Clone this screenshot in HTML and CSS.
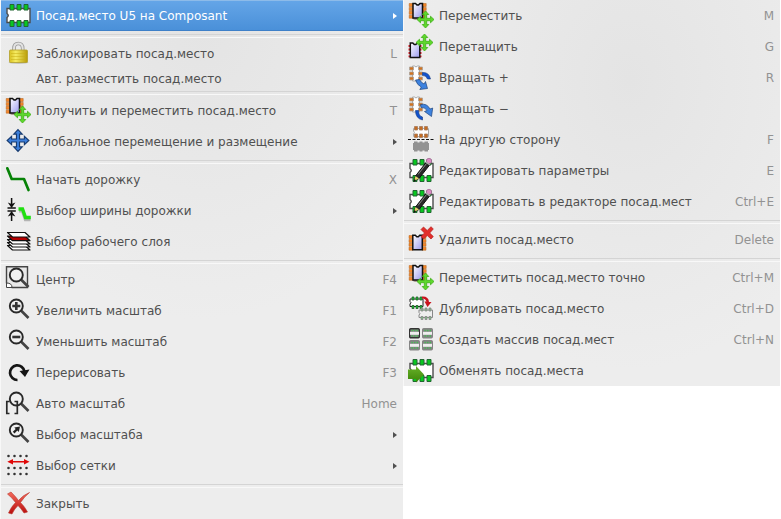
FILE: index.html
```html
<!DOCTYPE html>
<html lang="ru">
<head>
<meta charset="utf-8">
<title>Контекстное меню</title>
<link rel="stylesheet" href="styles.css">
</head>
<body>
<svg class="defs" aria-hidden="true">
  <defs>
    <linearGradient id="chipFill" x1="0" y1="0" x2="1" y2="1"><stop offset="0" stop-color="#fff"/><stop offset="1" stop-color="#9999ee"/></linearGradient>
    <linearGradient id="gold" x1="0" y1="0" x2="1" y2="0"><stop offset="0" stop-color="#d8c020"/><stop offset=".35" stop-color="#f6ec62"/><stop offset="1" stop-color="#b89c08"/></linearGradient>
    <linearGradient id="redFade" x1="0" y1="0" x2="0" y2="1"><stop offset="0" stop-color="#f46a5c"/><stop offset="1" stop-color="#b80c0c"/></linearGradient>
    <linearGradient id="greenFade" x1="0" y1="0" x2="0" y2="1"><stop offset="0" stop-color="#69b32a"/><stop offset="1" stop-color="#3c8508"/></linearGradient>
    <path id="cross4" d="M0-8.500L3.300-5H1.200V-1.200H5V-3.300L8.500 0L5 3.300V1.200H1.200V5H3.300L0 8.500L-3.300 5H-1.200V1.200H-5V3.300L-8.500 0L-5-3.300V-1.200H-1.200V-5H-3.300Z"/>
    <g id="chip">
      <path d="M0 0H2.500L4 1.500H5.500L7 0H9.500V14.500H0Z" fill="url(#chipFill)" stroke="#111" stroke-width="1.500"/>
    </g>
    <g id="orangePins" fill="#f5862a" stroke="#b0621c" stroke-width=".5">
      <path d="M0 0h4v3H0zM0 3.900h4v3H0zM0 7.800h4v3H0zM0 11.700h4v3H0zM13 0h4v3h-4zM13 3.900h4v3h-4zM13 7.800h4v3h-4zM13 11.700h4v3h-4z"/>
    </g>
    <g id="lens">
      <path d="M16 13.500L23.500 21" stroke="#444" stroke-width="2.600"/>
      <circle cx="11.300" cy="9" r="6.500" fill="#f1f1f1" stroke="#292929" stroke-width="1.900"/>
    </g>
    <g id="sideModule">
      <path d="M4.500 2H6.500Q8 4 9.500 2H11.500V17H4.500Z" fill="#fff" stroke="#aaa"/>
      <path d="M1.500 3h4v3h-4zM1.500 8h4v3h-4zM1.500 13h4v3h-4zM10.500 3h4v3h-4zM10.500 8h4v3h-4zM10.500 13h4v3h-4z" fill="#d4731e" stroke="#a9a29b" stroke-width=".8"/>
    </g>
    <symbol id="footprint" viewBox="0 0 28 27">
      <path d="M2 6.500H25V20.500H2V15.500Q4.500 13.500 2 11.500Z" fill="#fff" stroke="#4b4b4b" stroke-width="1.400"/>
      <path d="M5 2.500h4v5.500H5zM12 2.500h4v5.500h-4zM19 2.500h4v5.500h-4zM5 18.500h4v6H5zM12 18.500h4v6h-4zM19 18.500h4v6h-4z" fill="#08c820" stroke="#226632"/>
    </symbol>
    <symbol id="lock" viewBox="0 0 28 27">
      <ellipse cx="13.500" cy="22.500" rx="10" ry="1.500" fill="#c4c4bc"/>
      <path d="M9 11V8.500Q9 3.500 13.300 3.500T17.700 8.500V11" fill="none" stroke="#999" stroke-width="3.600"/>
      <path d="M9 11V8.500Q9 3.500 13.300 3.500T17.700 8.500V11" fill="none" stroke="#e2e2e2" stroke-width="2"/>
      <rect x="4.500" y="10" width="18" height="12.500" rx="1" fill="url(#gold)" stroke="#b3a02c" stroke-width=".8"/>
      <path d="M6 13.500H21M6 16.500H21M6 19.500H21" stroke="#c7ad15" stroke-width=".5"/>
    </symbol>
    <symbol id="get-move" viewBox="0 0 28 27">
      <rect x="5" y="2" width="11" height="16" rx="2" fill="#7d6b59" opacity=".6"/>
      <use href="#orangePins" x="1.200" y="1.500"/><use href="#chip" x="5" y="1.500"/>
      <use href="#cross4" x="17.500" y="17.500" fill="#5ed82c" stroke="#3fae18" stroke-width=".8"/>
    </symbol>
    <symbol id="drag" viewBox="0 0 28 27">
      <path d="M0.500 13h13M0.500 16.500h13M0.500 20h13M0.500 23.300h13" stroke="#e3202a" stroke-width="1.800"/>
      <use href="#chip" x="2.300" y="10"/>
      <use href="#cross4" x="16.500" y="9.500" fill="#5ed82c" stroke="#3fae18" stroke-width=".8"/>
    </symbol>
    <symbol id="move-all" viewBox="0 0 28 27">
      <g transform="translate(13 12.500) scale(1.280)"><use href="#cross4" fill="#3c7fdc" stroke="#183c70" stroke-width=".9"/></g>
    </symbol>
    <symbol id="track" viewBox="0 0 28 27"><path d="M2.300 2.300L6.700 13H19L23.500 24" fill="none" stroke="#068206" stroke-width="2.700" stroke-linecap="round" stroke-linejoin="round"/></symbol>
    <symbol id="track-width" viewBox="0 0 28 27">
      <path d="M14 13.800H17.500L20.500 22.500H25.500" fill="none" stroke="#b4b4b4" stroke-width="3.500"/>
      <path d="M13.500 12H17.500L20.500 20.500H25.800" fill="none" stroke="#20e010" stroke-width="3.400"/>
      <path d="M2.500 11H10.800M2.500 14H10.800M6.600 1V7M6.600 18V24" stroke="#111" stroke-width="1.500"/>
      <path d="M2.800 5.500L6.600 7L10.400 5.500L6.600 11ZM2.800 19.500L6.600 18L10.400 19.500L6.600 14Z" fill="#111"/>
    </symbol>
    <symbol id="layers" viewBox="0 0 28 27">
      <g stroke="#111" stroke-width="1.200" fill="#fff" stroke-linejoin="round">
        <path d="M2.500 17.500H20L25 22H7.500Z"/><path d="M2.500 14.500H20L25 19H7.500Z"/><path d="M2.500 11.500H20L25 16H7.500Z"/>
        <path d="M2.500 8H20L25 12.700H7.500Z" fill="#b40000"/><path d="M2.500 4.500H20L25 9H7.500Z"/>
      </g>
    </symbol>
    <symbol id="zoom-page" viewBox="0 0 28 27">
      <path d="M1.500 .800H22.500V21.500H7L1.500 17Z" fill="#e8e8e8" stroke="#444" stroke-width="1.400"/>
      <path d="M1.500 17V21.500H7Q7 17 1.500 17" fill="#fff" stroke="#444"/><use href="#lens"/>
    </symbol>
    <symbol id="zoom-in" viewBox="0 0 28 27"><use href="#lens"/><path d="M7.300 9H15.300M11.300 5V13" stroke="#333" stroke-width="2.600"/></symbol>
    <symbol id="zoom-out" viewBox="0 0 28 27"><use href="#lens"/><path d="M7.300 9H15.300" stroke="#333" stroke-width="2.600"/></symbol>
    <symbol id="redraw" viewBox="0 0 28 27"><path d="M12.500 21A7.300 7.300 0 1 1 19.500 12.500" fill="none" stroke="#151515" stroke-width="2.700"/><path d="M14.500 12L24.500 10.500L20 18Z" fill="#151515"/></symbol>
    <symbol id="zoom-auto" viewBox="0 0 28 27"><use href="#lens"/><path d="M4.500 11.500H1.800V23.500H4.500M9.500 11.500H12.300V23.500H9.500" fill="none" stroke="#292929" stroke-width="1.700"/></symbol>
    <symbol id="zoom-select" viewBox="0 0 28 27"><use href="#lens"/><path d="M15 5.500L13.800 11L12.300 9.600L9.500 12.500L7.800 10.800L10.700 8L9.300 6.600Z" fill="#222"/></symbol>
    <symbol id="grid" viewBox="0 0 28 27">
      <path d="M3.500 4H23M3.500 16H23M3.500 22H23" stroke="#333" stroke-width="2.600" stroke-linecap="round" stroke-dasharray="0 6"/>
      <path d="M2.300 9.700L8 7V9H19V7L24.500 9.700L19 12.500V10.500H8V12.500Z" fill="#e00808"/>
    </symbol>
    <symbol id="close" viewBox="0 0 28 27">
      <path d="M2.500 4L6 2Q11 7 13.500 10.500Q18 5 24.500 2.500Q19 7 15.500 12.500Q20 17 22.500 22L19 23Q16 18.500 13 15.500Q9 19.500 7 24L3.500 23Q6 17 10.500 12.500Q7 7.500 2.500 4Z" fill="url(#redFade)" stroke="#b83a30" stroke-width=".6"/>
    </symbol>
    <symbol id="rotate-ccw" viewBox="0 0 28 27">
      <use href="#sideModule"/>
      <path d="M14.500 8.500Q21 8 22.500 15H19.500Q18 11 14.500 11.500Z" fill="#1252cc" stroke="#103880" stroke-width=".6"/>
      <path d="M7.500 16L11.500 15.500Q13 18.500 16 20L17.500 17.500L19.500 24.500L11.800 25.500L13.300 23Q9 21 7.500 16Z" fill="#3d82df" stroke="#20457d" stroke-width=".7"/>
    </symbol>
    <symbol id="rotate-cw" viewBox="0 0 28 27">
      <use href="#sideModule"/>
      <path d="M7.500 15.500H10.500Q10.500 21 14.500 22V25Q7.500 23.500 7.500 15.500Z" fill="#1252cc" stroke="#103880" stroke-width=".6"/>
      <path d="M12.500 9.500Q19 8 22 14L24.700 13L23.500 21.500L16.500 16.500L19 15.500Q17 12 13 12.500Z" fill="#3d82df" stroke="#20457d" stroke-width=".7"/>
    </symbol>
    <symbol id="flip" viewBox="0 0 28 27">
      <path d="M5.500 2.500H20.500V10.500H5.500V8Q7.500 6.500 5.500 5Z" fill="#fff" stroke="#aaa"/>
      <path d="M6.500 .500h3v3.500h-3zM11.500 .500h3v3.500h-3zM16.500 .500h3v3.500h-3zM6.500 8h3v3.500h-3zM11.500 8h3v3.500h-3zM16.500 8h3v3.500h-3z" fill="#c66c20" stroke="#a3795a" stroke-width=".8"/>
      <path d="M0 13.500H26" stroke="#111" stroke-width="1.200" stroke-dasharray="3 1.500"/>
      <path d="M6 15.500h3.500v1h2v-1h3v1h2v-1H20v1.500h1v7h-1v1.500h-3.500v-1h-2v1h-3v-1h-2v1H6V24H5v-7h1z" fill="#929292"/>
    </symbol>
    <symbol id="edit" viewBox="0 0 28 27">
      <use href="#footprint" width="28" height="27"/>
      <path d="M6 24L7.500 19L18.500 5L22 7.500L11 21.500Z" fill="#292929" stroke="#111"/>
      <path d="M6 24L7.500 19L11 21.500Z" fill="#e6d56b"/><path d="M10 17.500L18.500 6.500" stroke="#888"/>
      <path d="M5.500 25L6.500 22L8 23.300Z" fill="#111"/>
      <circle cx="21" cy="4" r="2.700" fill="#dc8bc4" stroke="#8b5b80" stroke-width=".6"/><path d="M18 5L22 8" stroke="#aaa" stroke-width="1.500"/>
    </symbol>
    <symbol id="delete" viewBox="0 0 28 27">
      <use href="#orangePins" x="1" y="9.500"/><use href="#chip" x="4.800" y="9.300"/>
      <path d="M13 3.500L15.500 1L19.200 4.500L23 .700L25.300 3L21.700 7L25.300 10.500L23 13L19.200 9.500L15.500 13L13 10.500L16.500 7Z" fill="#e22e2b" stroke="#b51e1b" stroke-width=".7"/>
    </symbol>
    <symbol id="duplicate" viewBox="0 0 28 27">
      <path d="M2 4H15V11.500H2V9Q4 7.700 2 6.500Z" fill="#fff" stroke="#222"/>
      <path d="M4 2h2v3H4zM8 2h2v3H8zM12 2h2v3h-2zM4 10.500h2v3H4zM8 10.500h2v3H8zM12 10.500h2v3h-2z" fill="#19c832" stroke="#245d2b" stroke-width=".8"/>
      <path d="M11 15H24.500V22.500H11V20Q13 18.700 11 17.500Z" fill="#eee" stroke="#888"/>
      <path d="M13 13h2v3h-2zM17 13h2v3h-2zM21 13h2v3h-2zM13 21.500h2v3h-2zM17 21.500h2v3h-2zM21 21.500h2v3h-2z" fill="#83bd88" stroke="#888" stroke-width=".8"/>
      <path d="M14 1.500Q20.500 1 21 7H23.500L19.500 12L16.500 6.500H18.500Q17.500 3.500 14 3.500Z" fill="#c9141d"/>
    </symbol>
    <g id="arrayCell"><rect x=".7" y=".7" width="9.600" height="9" rx="1" fill="#858585" stroke="currentColor" stroke-width="1.400"/><rect x="1" y="3.800" width="9" height="3" fill="#eee"/><path d="M2.500 2.500H9.500M2.500 8H9.500" stroke="#42bd50" stroke-width="1.300" stroke-dasharray="1.300 1.300"/></g>
    <symbol id="array" viewBox="0 0 28 27"><use href="#arrayCell" x="1" y="2" color="#333"/><use href="#arrayCell" x="14" y="2" color="#858585"/><use href="#arrayCell" x="1" y="14" color="#858585"/><use href="#arrayCell" x="14" y="14" color="#858585"/></symbol>
    <symbol id="exchange" viewBox="0 0 28 27"><use href="#footprint" width="28" height="27"/><path d="M0 12.500H8V9L16 17.500L8 25.500V22H0Z" fill="url(#greenFade)"/></symbol>
  </defs>
</svg>
<main class="menus">
  <ul class="menu">
    <li><button class="item selected"><svg class="icon"><use href="#footprint"/></svg><span>Посад.место U5 на Composant</span><i class="more"></i></button></li>
    <li class="separator"></li>
    <li><button class="item"><svg class="icon"><use href="#lock"/></svg><span>Заблокировать посад.место</span><kbd>L</kbd></button></li>
    <li><button class="item plain"><span>Авт. разместить посад.место</span></button></li>
    <li class="separator"></li>
    <li><button class="item"><svg class="icon"><use href="#get-move"/></svg><span>Получить и переместить посад.место</span><kbd>T</kbd></button></li>
    <li><button class="item"><svg class="icon"><use href="#move-all"/></svg><span>Глобальное перемещение и размещение</span><i class="more"></i></button></li>
    <li class="separator"></li>
    <li><button class="item"><svg class="icon"><use href="#track"/></svg><span>Начать дорожку</span><kbd>X</kbd></button></li>
    <li><button class="item"><svg class="icon"><use href="#track-width"/></svg><span>Выбор ширины дорожки</span><i class="more"></i></button></li>
    <li><button class="item"><svg class="icon"><use href="#layers"/></svg><span>Выбор рабочего слоя</span></button></li>
    <li class="separator"></li>
    <li><button class="item"><svg class="icon"><use href="#zoom-page"/></svg><span>Центр</span><kbd>F4</kbd></button></li>
    <li><button class="item"><svg class="icon"><use href="#zoom-in"/></svg><span>Увеличить масштаб</span><kbd>F1</kbd></button></li>
    <li><button class="item"><svg class="icon"><use href="#zoom-out"/></svg><span>Уменьшить масштаб</span><kbd>F2</kbd></button></li>
    <li><button class="item"><svg class="icon"><use href="#redraw"/></svg><span>Перерисовать</span><kbd>F3</kbd></button></li>
    <li><button class="item"><svg class="icon"><use href="#zoom-auto"/></svg><span>Авто масштаб</span><kbd>Home</kbd></button></li>
    <li><button class="item"><svg class="icon"><use href="#zoom-select"/></svg><span>Выбор масштаба</span><i class="more"></i></button></li>
    <li><button class="item"><svg class="icon"><use href="#grid"/></svg><span>Выбор сетки</span><i class="more"></i></button></li>
    <li class="separator"></li>
    <li><button class="item"><svg class="icon"><use href="#close"/></svg><span>Закрыть</span></button></li>
  </ul>
  <ul class="menu submenu">
    <li><button class="item"><svg class="icon"><use href="#get-move"/></svg><span>Переместить</span><kbd>M</kbd></button></li>
    <li><button class="item"><svg class="icon"><use href="#drag"/></svg><span>Перетащить</span><kbd>G</kbd></button></li>
    <li><button class="item"><svg class="icon"><use href="#rotate-ccw"/></svg><span>Вращать +</span><kbd>R</kbd></button></li>
    <li><button class="item"><svg class="icon"><use href="#rotate-cw"/></svg><span>Вращать −</span></button></li>
    <li><button class="item"><svg class="icon"><use href="#flip"/></svg><span>На другую сторону</span><kbd>F</kbd></button></li>
    <li><button class="item"><svg class="icon"><use href="#edit"/></svg><span>Редактировать параметры</span><kbd>E</kbd></button></li>
    <li><button class="item"><svg class="icon"><use href="#edit"/></svg><span>Редактировать в редакторе посад.мест</span><kbd>Ctrl+E</kbd></button></li>
    <li class="separator"></li>
    <li><button class="item"><svg class="icon"><use href="#delete"/></svg><span>Удалить посад.место</span><kbd>Delete</kbd></button></li>
    <li class="separator"></li>
    <li><button class="item"><svg class="icon"><use href="#get-move"/></svg><span>Переместить посад.место точно</span><kbd>Ctrl+M</kbd></button></li>
    <li><button class="item"><svg class="icon"><use href="#duplicate"/></svg><span>Дублировать посад.место</span><kbd>Ctrl+D</kbd></button></li>
    <li><button class="item"><svg class="icon"><use href="#array"/></svg><span>Создать массив посад.мест</span><kbd>Ctrl+N</kbd></button></li>
    <li><button class="item"><svg class="icon"><use href="#exchange"/></svg><span>Обменять посад.места</span></button></li>
  </ul>
</main>
</body>
</html>
```
FILE: styles.css
```css
* { box-sizing: border-box; }

body {
  margin: 0;
  background: #fff;
  color: #505050;
  font-family: "DejaVu Sans", sans-serif;
  font-size: 12px;
}

.defs {
  position: absolute;
  width: 0;
  height: 0;
}

.menus {
  display: grid;
  grid-template-columns: 403fr 377fr;
  align-items: start;
  padding-right: 1px;
}

.menu {
  margin: 0;
  padding: 0;
  list-style: none;
  border-left: 1px solid #f8f8f8;
  background: radial-gradient(ellipse 60% 290px at 50% 30px, #e4e4e4, #ededed);
}

.submenu {
  background: radial-gradient(ellipse 60% 290px at 60% 80px, #e4e4e4, #ededed);
}

.item {
  display: flex;
  align-items: center;
  gap: 3px;
  width: 100%;
  height: 31px;
  padding: 0 6px 0 4px;
  border: 0;
  background: none;
  color: inherit;
  font: inherit;
  text-align: left;
  white-space: nowrap;
}

.item span { flex: 1; }

.plain {
  height: 19px;
  padding-left: 35px;
}

.selected {
  border-top: 1px solid #8dbbe9;
  border-bottom: 1px solid #3e80c8;
  background: linear-gradient(#64a5e7, #4a90d9);
  color: #fff;
}

.icon {
  flex: none;
  width: 28px;
  height: 27px;
}

kbd {
  color: #929292;
  font: inherit;
}

.more {
  border: 3px solid transparent;
  border-left: 4px solid currentColor;
  border-right-width: 0;
}

.separator {
  height: 7px;
  padding-top: 3px;
}

.separator::before {
  content: "";
  display: block;
  height: 2px;
  border-top: 1px solid #d4d4d4;
  border-bottom: 1px solid #f8f8f8;
}
```
